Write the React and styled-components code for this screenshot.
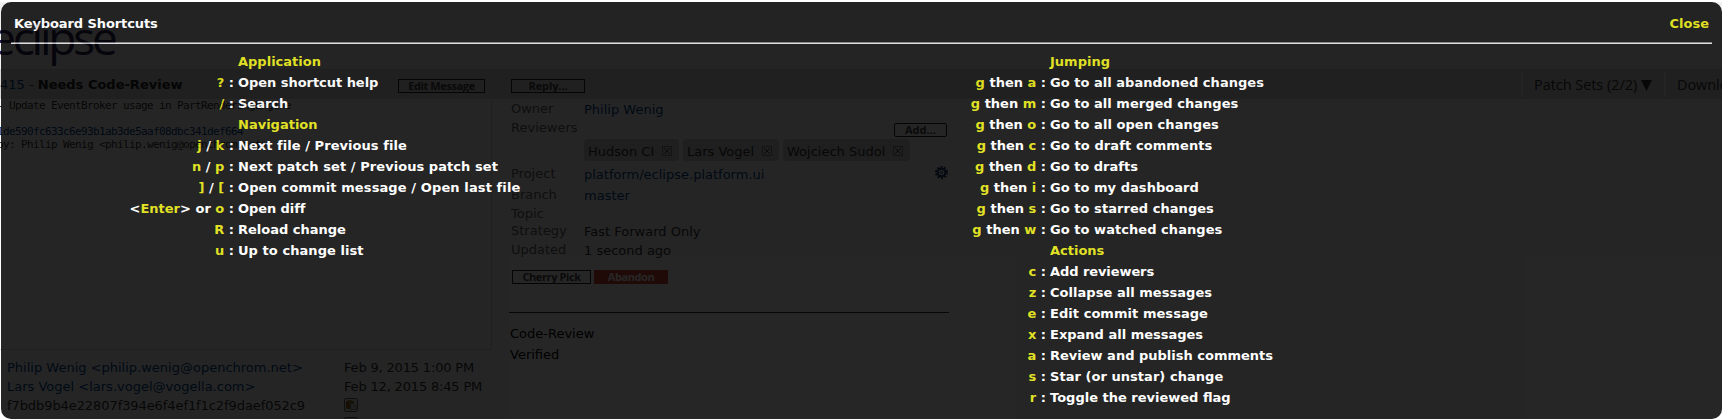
import React from "react";
import styled, { createGlobalStyle } from "styled-components";

const Global = createGlobalStyle`
  html, body { margin: 0; background: #fff; overflow: hidden; }
  * { box-sizing: border-box; }
`;

const Screen = styled.div`
  position: relative;
  width: 1722px;
  height: 419px;
  overflow: hidden;
  font: 13px/15px "DejaVu Sans", sans-serif;
`;

const Page = styled.div`
  width: 1722px;
  height: 419px;
  overflow: hidden;
  color: #353535;
`;

const SiteHeader = styled.header`
  height: 69px;
  background: linear-gradient(#fff 2px, #f0f0f0 2px, #f4f4f4);
`;

const Logo = styled.div`
  margin-left: -10px;
  padding-top: 10px;
  font: 46px/54px "Open Sans", sans-serif;
  letter-spacing: -3.2px;
  color: #2c2255;
`;

const TitleBar = styled.div`
  display: flex;
  width: 1800px;
  height: 30px;
  background: #d8d8d8;
`;

const TitleText = styled.div`
  flex: none;
  width: 398px;
  padding-top: 8px;
  white-space: nowrap;
  b { color: #222; }
`;

const Link = styled.span`
  color: #00478f;
`;

const Button = styled.span`
  display: block;
  flex: none;
  width: ${(p) => p.$w}px;
  height: 14px;
  border: 1px solid ${(p) => (p.$danger ? "#d14836" : "#222")};
  border-radius: ${(p) => p.$r || 0}px;
  background: ${(p) => (p.$danger ? "#d14836" : "transparent")};
  color: ${(p) => (p.$danger ? "#fff" : "#444")};
  font: bold 11px/12px "Open Sans", sans-serif;
  letter-spacing: ${(p) => p.$track ?? -0.4}px;
  text-align: center;
  white-space: nowrap;
`;

const ReplySlot = styled.div`
  flex: none;
  width: 1036px;
  padding: 10px 0 0 26px;
`;

const EditSlot = styled.div`
  flex: none;
  width: 87px;
  padding-top: 10px;
`;

const BarItem = styled.div`
  flex: none;
  display: flex;
  align-items: center;
  gap: 4px;
  width: ${(p) => p.$w}px;
  height: 25px;
  margin-top: 3px;
  padding-left: 11px;
  border-left: 2px solid #f4f4f4;
  font: 14.4px/25px "Open Sans", sans-serif;
  white-space: nowrap;
`;

const Body = styled.div`
  display: flex;
`;

const Left = styled.div`
  width: 492px;
`;

const CommitBox = styled.pre`
  width: 492px;
  height: 251px;
  margin: 0;
  border: solid #ddd;
  border-width: 0 1px 1px 0;
  font: 11px/13px "DejaVu Sans Mono", monospace;
  letter-spacing: -0.622px;
`;

const CommitLine = styled.div`
  height: 13px;
  margin-left: -3px;
`;

const People = styled.div`
  padding: 8px 0 0 7px;
`;

const PersonRow = styled.div`
  display: grid;
  grid-template-columns: 337px 1fr;
  height: 19px;
  line-height: 19px;
  white-space: nowrap;
`;

const When = styled.span`
  letter-spacing: -0.17px;
`;

const Commit = styled.span`
  letter-spacing: -0.08px;
`;

const Info = styled.div`
  width: 440px;
  margin-left: 17px;
`;

const InfoRow = styled.div`
  display: flex;
  height: ${(p) => p.$h}px;
  padding-left: 2px;
`;

const Label = styled.span`
  width: 73px;
  padding-top: 2px;
  color: #666;
`;

const Value = styled.span`
  flex: 1;
  padding-top: 3px;
`;

const AddSlot = styled.div`
  padding: 5px 2px 0 0;
`;

const GearSlot = styled.div`
  padding: 2px 1px 0 0;
`;

const Chips = styled.div`
  display: flex;
  gap: 4px;
  height: 25px;
  padding: 0 0 3px 75px;
`;

const Chip = styled.span`
  display: flex;
  align-items: center;
  justify-content: space-between;
  width: ${(p) => p.$w}px;
  height: 22px;
  padding: 3px 7px 0 4px;
  border-radius: 4px;
  background: #d4d4d4;
  white-space: nowrap;
  svg { margin-top: -2px; }
`;

const Actions = styled.div`
  display: flex;
  gap: 3px;
  height: 42px;
  padding-left: 3px;
`;

const Votes = styled.div`
  padding: 10px 0 0 1px;
  border-top: 1px solid #333;
  color: #000;
  line-height: 21px;
`;

const Popup = styled.section`
  position: absolute;
  left: 1px;
  top: 2px;
  width: 1721px;
  height: 417px;
  border-radius: 10px;
  background: #000;
  opacity: 0.85;
  color: #fff;
  font-weight: bold;
`;

const PopupHeader = styled.div`
  display: flex;
  justify-content: space-between;
  height: 40px;
  margin: 0 10px;
  padding: 14px 3px 0;
`;

const Title = styled.span`
  letter-spacing: -0.1px;
`;

const Rule = styled.div`
  height: 2px;
  margin: 0 10px;
  border-top: 1px solid #777;
  border-bottom: 1px solid #ddd;
`;

const Key = styled.span`
  color: #dddd00;
`;

const Columns = styled.div`
  display: grid;
  grid-template-columns: 812px 812px;
  padding-top: 7px;
`;

const Shortcut = styled.div`
  display: grid;
  grid-template-columns: 233px 1fr;
  column-gap: 4px;
  height: 21px;
  line-height: 21px;
  white-space: nowrap;
`;

const Keys = styled.span`
  text-align: right;
`;

const Description = styled.span`
  letter-spacing: ${(p) => p.$track || 0}px;
`;

const Remove = () => (
  <svg width="10" height="10" viewBox="0 0 10 10" fill="none" stroke="#555">
    <rect x=".5" y=".5" width="9" height="9" stroke="#888" />
    <path d="M2 2l6 6M8 2l-6 6" />
  </svg>
);

const Gear = () => (
  <svg width="13" height="13" viewBox="0 0 13 13" fill="none" stroke="#1d3d74">
    <circle cx="6.5" cy="6.5" r="5.5" strokeWidth="2" strokeDasharray="2 1.46" />
    <circle cx="6.5" cy="6.5" r="3.8" strokeWidth="2" />
    <circle cx="6.5" cy="6.5" r="1.3" />
  </svg>
);

const Copy = () => (
  <svg width="14" height="14" viewBox="0 0 14 14">
    <rect x=".5" y=".5" width="13" height="13" rx="1.5" fill="#eee" stroke="#666" />
    <rect x="2" y="3" width="8" height="8" rx="1" fill="#9b6a1c" />
    <rect x="4" y="2" width="4" height="2" fill="#9b8a5c" />
    <path d="M6.500 5.500h3.500l2 2v4h-5.500z" fill="#ddd" stroke="#999" />
  </svg>
);

const CopyCell = styled.span`
  display: flex;
  padding-top: 2px;
  align-items: flex-start;
`;

const Triangle = () => (
  <svg width="11" height="12" viewBox="0 0 11 12" fill="#353535">
    <path d="M0 1h11L5.500 12z" />
  </svg>
);

const left = [
  ["Application"],
  ["*?*", "Open shortcut help", -0.04],
  ["*/*", "Search"],
  ["Navigation"],
  ["*j* / *k*", "Next file / Previous file", 0.05],
  ["*n* / *p*", "Next patch set / Previous patch set", 0.06],
  ["*]* / *[*", "Open commit message / Open last file", 0.11],
  ["<*Enter*> or *o*", "Open diff", -0.08],
  ["*R*", "Reload change"],
  ["*u*", "Up to change list", 0.06],
];

const right = [
  ["Jumping"],
  ["*g* then *a*", "Go to all abandoned changes", 0.03],
  ["*g* then *m*", "Go to all merged changes", 0.03],
  ["*g* then *o*", "Go to all open changes", 0.05],
  ["*g* then *c*", "Go to draft comments", 0.1],
  ["*g* then *d*", "Go to drafts"],
  ["*g* then *i*", "Go to my dashboard", 0.04],
  ["*g* then *s*", "Go to starred changes", 0.05],
  ["*g* then *w*", "Go to watched changes", 0.05],
  ["Actions"],
  ["*c*", "Add reviewers", -0.08],
  ["*z*", "Collapse all messages", 0.04],
  ["*e*", "Edit commit message", 0.05],
  ["*x*", "Expand all messages"],
  ["*a*", "Review and publish comments"],
  ["*s*", "Star (or unstar) change", 0.04],
  ["*r*", "Toggle the reviewed flag"],
];

const ShortcutList = ({ items }) => (
  <div>
    {items.map(([keys, text, track]) => (
      <Shortcut key={keys}>
        {text ? (
          <>
            <Keys>
              {keys.split("*").map((s, i) => (i % 2 ? <Key key={i}>{s}</Key> : s))} :
            </Keys>
            <Description $track={track}>{text}</Description>
          </>
        ) : (
          <>
            <span />
            <Key>{keys}</Key>
          </>
        )}
      </Shortcut>
    ))}
  </div>
);

export default function App() {
  return (
    <Screen>
      <Global />
      <Page>
        <SiteHeader>
          <Logo>eclipse</Logo>
        </SiteHeader>
        <TitleBar>
          <TitleText>
            <Link>415</Link> - <b>Needs Code-Review</b>
          </TitleText>
          <EditSlot><Button $w={87}>Edit Message</Button></EditSlot>
          <ReplySlot><Button $w={74} $track={-0.1}>Reply...</Button></ReplySlot>
          <BarItem $w={143}>Patch Sets (2/2)<Triangle /></BarItem>
          <BarItem $w={100}>Download</BarItem>
        </TitleBar>
        <Body>
          <Left>
            <CommitBox>
              <CommitLine>- Update EventBroker usage in PartRenderingEngine</CommitLine>
              <CommitLine />
              <CommitLine><Link>1de590fc633c6e93b1ab3de5aaf08dbc341def664</Link></CommitLine>
              <CommitLine>by: Philip Wenig &lt;philip.wenig@openchrom.net&gt;</CommitLine>
            </CommitBox>
            <People>
              <PersonRow><Link>Philip Wenig &lt;philip.wenig@openchrom.net&gt;</Link><When>Feb 9, 2015 1:00 PM</When></PersonRow>
              <PersonRow><Link>Lars Vogel &lt;lars.vogel@vogella.com&gt;</Link><When>Feb 12, 2015 8:45 PM</When></PersonRow>
              <PersonRow><Commit>f7bdb9b4e22807f394e6f4ef1f1c2f9daef052c9</Commit><CopyCell><Copy /></CopyCell></PersonRow>
              <PersonRow><span /><CopyCell><Copy /></CopyCell></PersonRow>
            </People>
          </Left>
          <Info>
            <InfoRow $h={19}><Label>Owner</Label><Value><Link>Philip Wenig</Link></Value></InfoRow>
            <InfoRow $h={21}><Label>Reviewers</Label><Value /><AddSlot><Button $w={53} $r={2} $track={0}>Add...</Button></AddSlot></InfoRow>
            <Chips>
              <Chip $w={95}>Hudson CI<Remove /></Chip>
              <Chip $w={96}>Lars Vogel<Remove /></Chip>
              <Chip $w={127}>Wojciech Sudol<Remove /></Chip>
            </Chips>
            <InfoRow $h={21}><Label>Project</Label><Value><Link>platform/eclipse.platform.ui</Link></Value><GearSlot><Gear /></GearSlot></InfoRow>
            <InfoRow $h={19}><Label>Branch</Label><Value><Link>master</Link></Value></InfoRow>
            <InfoRow $h={17}><Label>Topic</Label></InfoRow>
            <InfoRow $h={19}><Label>Strategy</Label><Value>Fast Forward Only</Value></InfoRow>
            <InfoRow $h={30}><Label>Updated</Label><Value>1 second ago</Value></InfoRow>
            <Actions>
              <Button $w={79}>Cherry Pick</Button>
              <Button $w={74} $danger>Abandon</Button>
            </Actions>
            <Votes>
              <div>Code-Review</div>
              <div>Verified</div>
            </Votes>
          </Info>
        </Body>
      </Page>
      <Popup>
        <PopupHeader>
          <Title>Keyboard Shortcuts</Title>
          <Key>Close</Key>
        </PopupHeader>
        <Rule />
        <Columns>
          <ShortcutList items={left} />
          <ShortcutList items={right} />
        </Columns>
      </Popup>
    </Screen>
  );
}
